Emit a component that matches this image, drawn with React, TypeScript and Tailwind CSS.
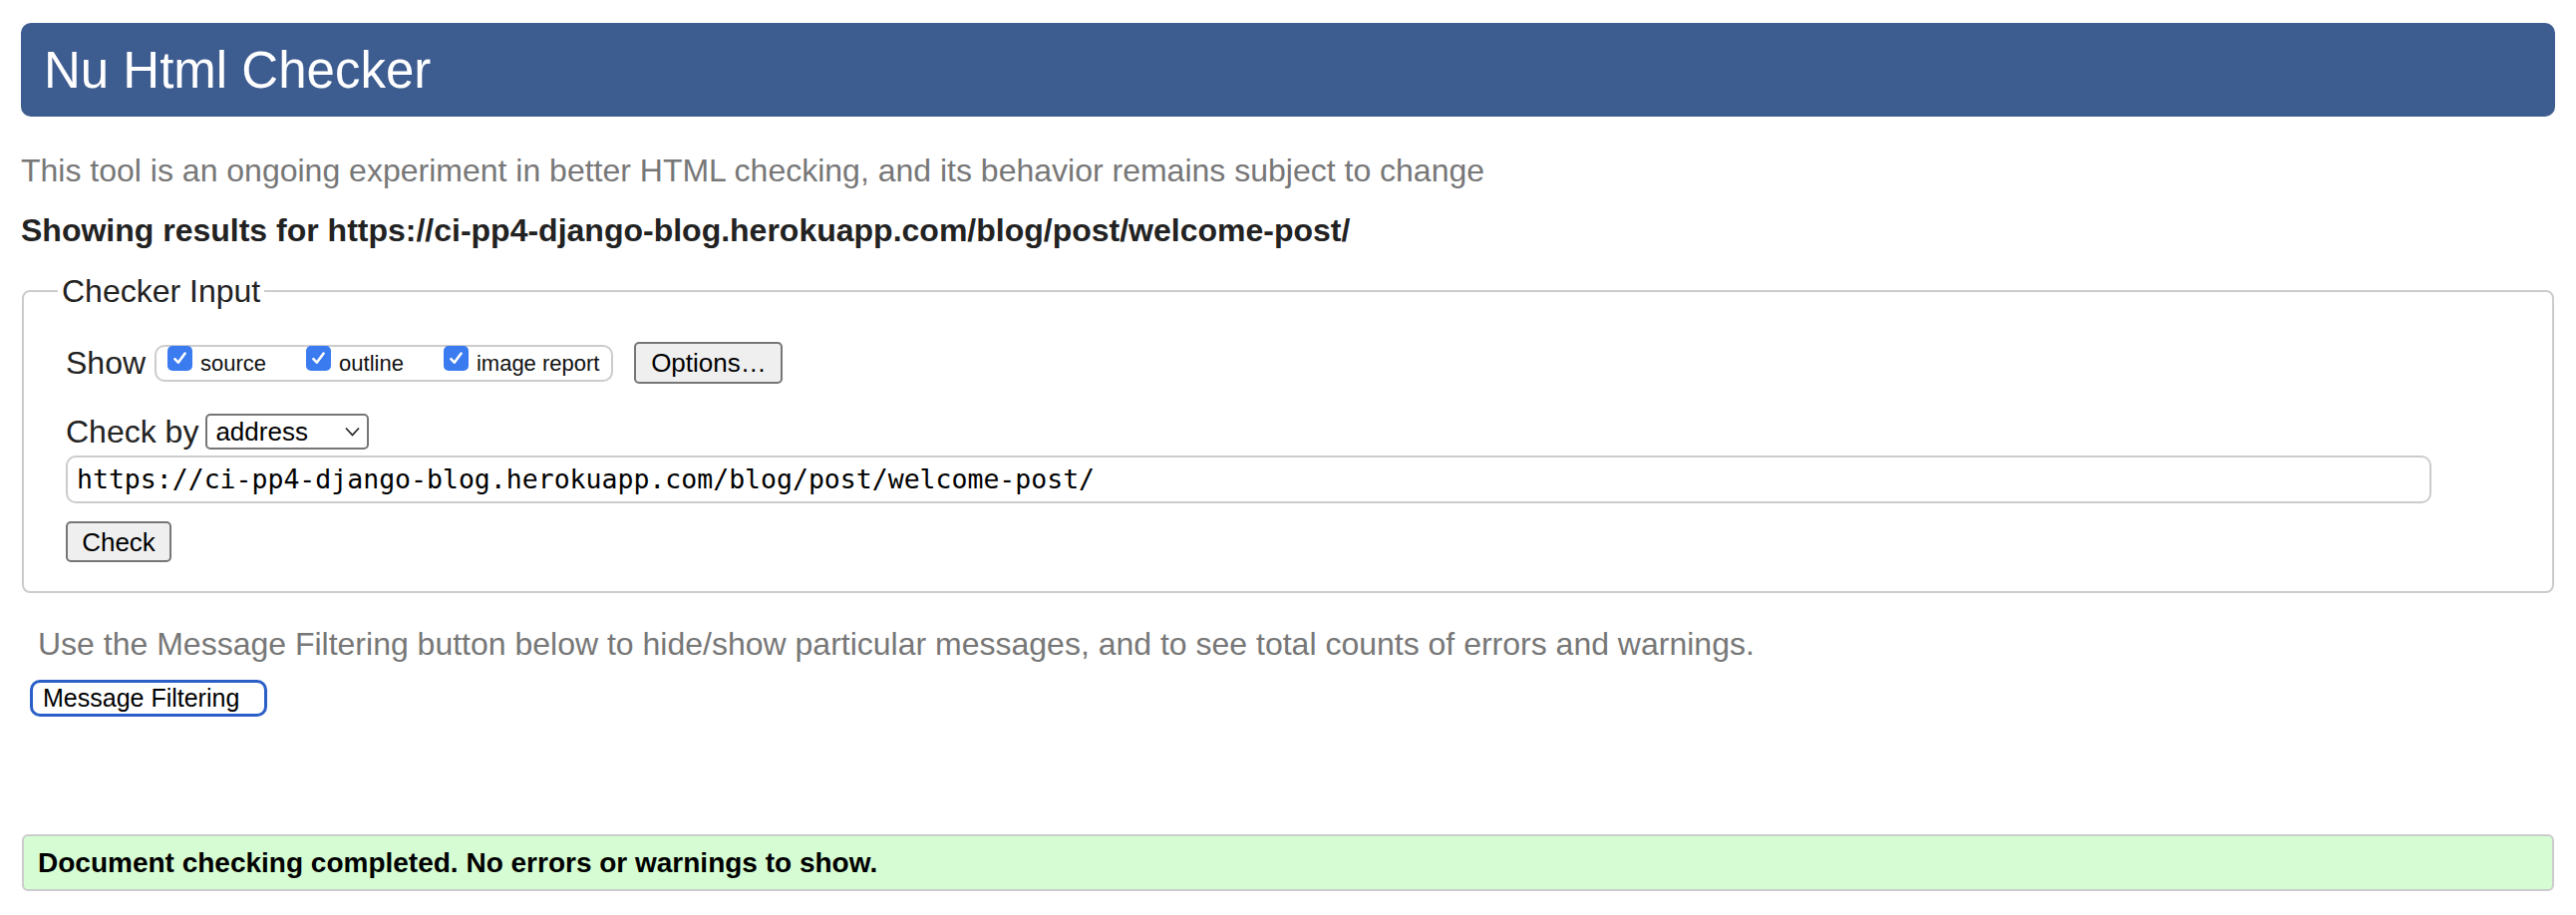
import React from 'react';

const sans = "font-['Liberation_Sans',Arial,Helvetica,sans-serif]";

function Tick() {
  return (
    <span className="flex h-[25px] w-[25px] shrink-0 items-center justify-center rounded-[5px] bg-[#3a7bf0] -mt-px">
      <svg width="17" height="17" viewBox="0 0 16 16" fill="none">
        <path d="M3.2 8.6 L6.4 12 L12.8 3.4" stroke="white" strokeWidth="2.4" strokeLinecap="round" strokeLinejoin="round" />
      </svg>
    </span>
  );
}

function ShowOption({ label }: { label: string }) {
  return (
    <div className="flex items-start gap-[8px]">
      <Tick />
      <span className="mt-[4px] text-[22px] leading-[26px] text-[#111]">{label}</span>
    </div>
  );
}

function GrayButton({ children, className = '' }: { children: React.ReactNode; className?: string }) {
  return (
    <div
      className={`flex items-center justify-center rounded-[5px] border-2 border-[#767676] bg-[#efefef] text-[26px] leading-none text-black ${className}`}
    >
      {children}
    </div>
  );
}

export default function App() {
  return (
    <div className={`${sans} min-h-[918px] bg-white px-[21px] pt-[23px] text-[#222]`}>
      <div className="flex h-[94px] items-center rounded-[10px] bg-[#3d5c90] px-[23px]">
        <h1 className="text-[51px] leading-none font-normal text-white">Nu Html Checker</h1>
      </div>

      <p className="mt-[36px] text-[32px] leading-[36px] text-[#777]">
        This tool is an ongoing experiment in better HTML checking, and its behavior remains subject to change
      </p>
      <p className="mt-[24px] text-[32px] leading-[36px] font-bold text-[#222]">
        Showing results for https://ci-pp4-django-blog.herokuapp.com/blog/post/welcome-post/
      </p>

      <fieldset className="mx-px mt-[25px] rounded-[8px] border-2 border-[#cccccc] px-[34px] pt-[33px] pb-[29px]">
        <legend className="px-[4px] text-[32px] leading-[36px] text-[#222]">Checker Input</legend>
        <div className="pl-[8px]">
          <div className="flex h-[42px] items-center">
            <span className="text-[32px] leading-[36px]">Show</span>
            <div className="ml-[9px] flex h-[37px] items-start gap-[40px] rounded-[10px] border-2 border-[#cccccc] pl-[11px] pr-[12px]">
              <ShowOption label="source" />
              <ShowOption label="outline" />
              <ShowOption label="image report" />
            </div>
            <GrayButton className="ml-[21px] h-[42px] w-[149px]">Options…</GrayButton>
          </div>

          <div className="mt-[30px] flex h-[36px] items-center">
            <span className="text-[32px] leading-[36px]">Check by</span>
            <div className="ml-[7px] flex h-[36px] w-[164px] items-center justify-between rounded-[5px] border-2 border-[#767676] pl-[8px] pr-[7px]">
              <span className="text-[26px] leading-none text-black">address</span>
              <svg width="15" height="10" viewBox="0 0 15 10" fill="none">
                <path d="M1 1.5 L7.5 8.5 L14 1.5" stroke="#222" strokeWidth="1.6" />
              </svg>
            </div>
          </div>

          <div className="mt-[6px] flex h-[48px] w-[2373px] items-center rounded-[10px] border-2 border-[#cccccc] pl-[9px]">
            <span className="font-['DejaVu_Sans_Mono',monospace] text-[26.5px] leading-none text-black">
              https://ci-pp4-django-blog.herokuapp.com/blog/post/welcome-post/
            </span>
          </div>

          <GrayButton className="mt-[18px] h-[41px] w-[106px]">Check</GrayButton>
        </div>
      </fieldset>

      <p className="mt-[33px] pl-[17px] text-[32px] leading-[36px] text-[#777]">
        Use the Message Filtering button below to hide/show particular messages, and to see total counts of errors and warnings.
      </p>
      <div className="ml-[9px] mt-[18px] flex h-[37px] w-[238px] items-center rounded-[10px] border-[3px] border-[#2a5fc8] bg-white pl-[10px]">
        <span className="text-[25px] leading-none text-black">Message Filtering</span>
      </div>

      <div className="mx-px mt-[118px] flex h-[57px] items-center rounded-[6px] border-2 border-[#cccccc] bg-[#d6fcd3] pl-[14px]">
        <span className="text-[28px] leading-none font-bold text-black">
          Document checking completed. No errors or warnings to show.
        </span>
      </div>
    </div>
  );
}
